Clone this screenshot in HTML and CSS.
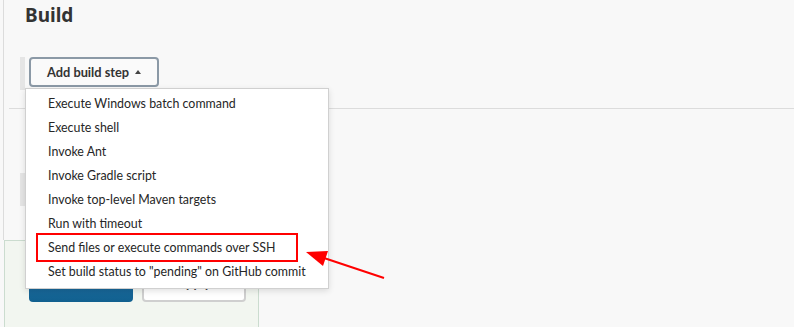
FILE: index.html
```html
<!DOCTYPE html>
<html lang="en">
<head>
    <meta charset="UTF-8">
    <title>Build</title>
    <link rel="stylesheet" href="styles.css">
</head>
<body>

<!-- build section of the job config -->
<div class="page">
    <section class="build">
        <h2 class="title">Build</h2>

        <div class="step">
            <span class="handle"></span>
            <div class="dropdown">
                <button class="add-step">Add build step <span class="caret"></span></button>
                <ul class="menu">
                    <li>Execute Windows batch command</li>
                    <li>Execute shell</li>
                    <li>Invoke Ant</li>
                    <li>Invoke Gradle script</li>
                    <li>Invoke top-level Maven targets</li>
                    <li>Run with timeout</li>
                    <li>Send files or execute commands over SSH</li>
                    <li>Set build status to "pending" on GitHub commit</li>
                </ul>
            </div>
        </div>

        <hr class="divider">

        <div class="step step-next">
            <span class="handle"></span>
        </div>
    </section>

    <!-- save / apply bar -->
    <div class="bottom-bar">
        <button class="btn-save">Save</button>
        <button class="btn-apply">Apply</button>
    </div>
</div>

<!-- red marker drawn over the screenshot -->
<svg class="annotation" width="794" height="327" viewBox="0 0 794 327">
    <rect x="37" y="234" width="260" height="27" fill="none" stroke="#f00" stroke-width="2"/>
    <line x1="384" y1="278" x2="318" y2="256" stroke="#f00" stroke-width="2"/>
    <polygon points="306,252 328,251 323,266" fill="#f00"/>
</svg>

</body>
</html>
```

FILE: styles.css
```css
body {
    margin: 0;
    background: #f8f8f8;
    font-family: Lato, "Noto Sans", sans-serif;
    color: #333;
    overflow: hidden;
}

.page {
    width: 794px;
    height: 327px;
    position: relative;
}

.build {
    margin-left: 3px;
    height: 240px;
    border-left: 1px solid #dcdcdc;
    box-sizing: border-box;
}

.title {
    margin: 0;
    padding: 2px 0 0 21px;
    font-family: "Noto Sans", sans-serif;
    font-size: 19px;
    line-height: 26px;
    font-weight: 700;
    color: #333;
}

.step {
    display: flex;
    align-items: flex-start;
    margin-top: 29px;
    padding-left: 16px;
}

.handle {
    display: block;
    width: 5px;
    height: 33px;
    background: #e5e5e5;
}

.dropdown {
    position: relative;
    margin-left: 4px;
}

.add-step {
    display: flex;
    align-items: center;
    gap: 6px;
    height: 30px;
    width: 130px;
    padding: 0 0 0 16px;
    background: #fafafa;
    border: 2px solid #8b99a6;
    border-radius: 4px;
    font-family: inherit;
    font-size: 12.8px;
    font-weight: 700;
    color: #333;
}

.caret {
    width: 0;
    height: 0;
    border-left: 3.5px solid transparent;
    border-right: 3.5px solid transparent;
    border-bottom: 4px solid #444;
}

.menu {
    position: absolute;
    z-index: 2;
    top: 31px;
    left: -4px;
    width: 304px;
    margin: 0;
    padding: 3px 0 4px;
    list-style: none;
    background: #fff;
    border: 1px solid #d0d0d0;
    box-sizing: border-box;
    box-shadow: 0 2px 6px rgba(0, 0, 0, 0.12);
}

.menu li {
    height: 24px;
    line-height: 24px;
    padding-left: 22px;
    font-size: 12.4px;
    color: #262626;
    white-space: nowrap;
}

.divider {
    margin: 18px 0 0 5px;
    border: 0;
    border-top: 1px solid #dcdcdc;
}

.step-next {
    margin-top: 64px;
}

.bottom-bar {
    display: flex;
    gap: 9px;
    margin-left: 4px;
    width: 255px;
    height: 87px;
    padding: 27px 0 0 24px;
    box-sizing: border-box;
    background: #f2f6f0;
    border: 1px solid #cbdccf;
    border-bottom: 0;
}

.bottom-bar button {
    width: 104px;
    height: 34px;
    padding: 0 0 5px;
    border-radius: 4px;
    font-family: inherit;
    font-size: 13px;
    font-weight: 700;
}

.btn-save {
    background: linear-gradient(#2474aa, #11608f);
    border: 0;
    color: #fff;
}

.btn-apply {
    background: #fff;
    border: 2px solid #cfcfcf;
    color: #444;
}

.annotation {
    position: absolute;
    top: 0;
    left: 0;
    z-index: 3;
    pointer-events: none;
}
```
